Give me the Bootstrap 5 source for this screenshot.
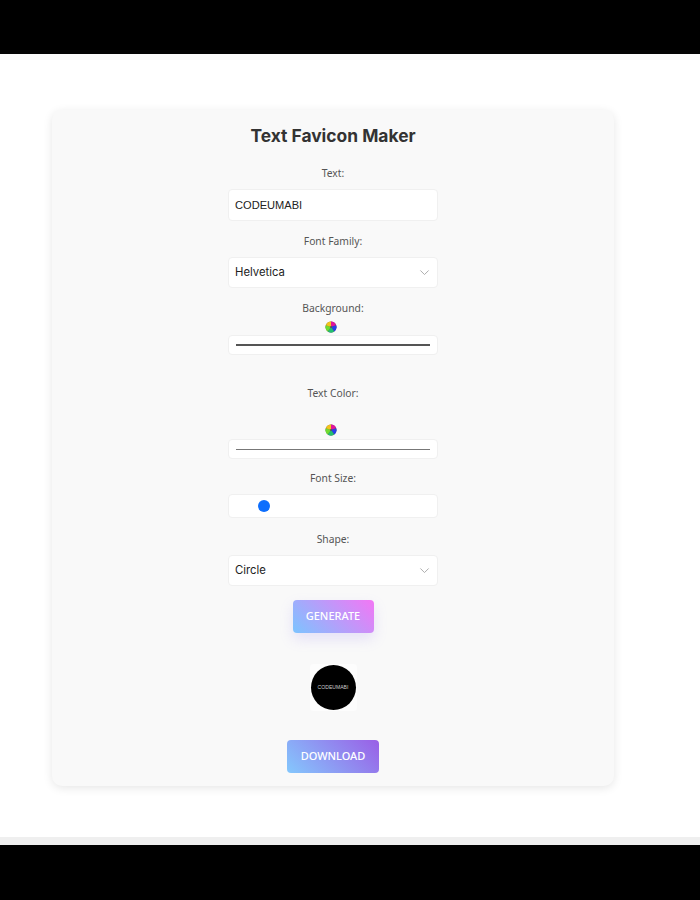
<!DOCTYPE html>
<html lang="en">
<head>
<meta charset="utf-8">
<title>Text Favicon Maker</title>
<link href="https://cdn.jsdelivr.net/npm/bootstrap@5.3.0/dist/css/bootstrap.min.css" rel="stylesheet">
<style>
html,body{height:900px;overflow:hidden;background:#fff;}
.shell{height:900px;display:flex;flex-direction:column;}
.blackbar{background:#000;flex:none;}
.blackbar.top{height:54px;}
.blackbar.bot{height:55px;}
.fadebar{flex:none;background:#f9f9f9;height:6px;}
.fadebar.low{background:#efefef;height:8px;}
.stage{flex:1;padding:50px 86px 0 52px;}
.panel{height:676px;background:#f9f9f9;border-radius:10px;box-shadow:0 2px 10px rgba(0,0,0,.1);padding:14px 0 0;text-align:center;font-family:"Noto Sans","Open Sans",sans-serif;}
.heading{font-family:Inter,"Liberation Sans",sans-serif;font-weight:700;font-size:17.4px;line-height:24px;color:#333;margin:0 0 18px;}
.formcol{width:210px;margin:0 auto;}
.lbl{display:block;font-size:10.3px;line-height:14px;color:#555;margin:0 0 9px;}
.lbl.bgl{margin:1px 0 6px;}
.lbl.tcl{margin:0 0 24px;}
.fld{display:block;width:100%;background:#fff;border:1px solid #f0f0f0;border-radius:4px;}
.txt{height:32px;padding:0 6px;font-family:"Liberation Sans",Arial,sans-serif;font-size:11.1px;color:#222;margin-bottom:13px;}
.sel{height:31px;padding:0 6px;font-family:Inter,sans-serif;font-size:11.3px;color:#222;margin-bottom:13px;appearance:none;background-image:url("data:image/svg+xml,%3csvg xmlns='http://www.w3.org/2000/svg' viewBox='0 0 16 16'%3e%3cpath fill='none' stroke='%23aaa' stroke-width='1.4' d='M2 5l6 6 6-6'/%3e%3c/svg%3e");background-repeat:no-repeat;background-position:right 7px center;background-size:11px;}
.sel.shapesel{margin-bottom:14px;}
.wheel{display:block;margin:0 auto;width:12px;height:12px;position:relative;left:-2px;}
.swatch{height:20px;display:flex;align-items:center;padding:0 7px;}
.swatch i{display:block;flex:1;height:1.5px;background:#555;}
.swatch.first{margin-top:2px;margin-bottom:31px;}
.swatch.pale{margin-top:3px;margin-bottom:12px;}
.swatch.pale i{background:#777;height:1px;}
.slider{height:24px;padding:0 7px;display:flex;align-items:center;margin-bottom:14px;}
.slider input{display:block;width:100%;height:12px;margin:0;}
.slider input::-webkit-slider-runnable-track{background:transparent;height:12px;}
.slider input::-webkit-slider-thumb{width:12px;height:12px;margin-top:0;background:#0d6efd;}
.actbtn{display:block;margin:0 auto;color:#fff;border:0;border-radius:4px;font-family:"Noto Sans","Open Sans",sans-serif;font-weight:500;font-size:11px;padding:0;}
.gen{width:81px;height:33px;background:linear-gradient(45deg,#7cc4ff,#f376f5);box-shadow:0 6px 14px rgba(150,130,240,.2);}
.dl{width:92px;height:33px;background:linear-gradient(45deg,#84c8fd,#9a5ee6);}
.iconbox{width:47px;height:47px;margin:31px auto 29px;background:#fdfdfd;border-radius:4px;padding:1px;}
.disc{width:45px;height:45px;background:#000;color:#ccc;border-radius:50%;display:flex;align-items:center;justify-content:center;font-family:"Liberation Sans",sans-serif;font-size:5.1px;}
</style>
</head>
<body>
<div class="shell">
  <div class="blackbar top"></div>
  <div class="fadebar"></div>
  <div class="stage">
    <div class="panel">
      <h1 class="heading">Text Favicon Maker</h1>
      <form class="formcol" onsubmit="return false">
        <label class="lbl" for="t">Text:</label>
        <input id="t" class="fld txt" type="text" value="CODEUMABI">
        <label class="lbl" for="f">Font Family:</label>
        <select id="f" class="fld sel"><option>Helvetica</option></select>
        <span class="lbl bgl">Background:</span>
        <svg class="wheel" viewBox="0 0 12 12" aria-hidden="true">
          <circle cx="6" cy="6" r="5.5" fill="#555"/>
          <path d="M6 6V.5A5.5 5.5 0 0 1 11.2 4.3Z" fill="#e0149b"/>
          <path d="M6 6 11.2 4.3A5.5 5.5 0 0 1 9.2 10.5Z" fill="#2a3fe8"/>
          <path d="M6 6 9.2 10.5A5.5 5.5 0 0 1 2.8 10.5Z" fill="#22c070"/>
          <path d="M6 6 2.8 10.5A5.5 5.5 0 0 1 .8 4.3Z" fill="#6fdc2f"/>
          <path d="M6 6 .8 4.3A5.5 5.5 0 0 1 6 .5Z" fill="#f3c31c"/>
          <circle cx="6" cy="6" r="1" fill="#555"/>
        </svg>
        <div class="fld swatch first"><i></i></div>
        <span class="lbl tcl">Text Color:</span>
        <svg class="wheel" viewBox="0 0 12 12" aria-hidden="true">
          <circle cx="6" cy="6" r="5.5" fill="#555"/>
          <path d="M6 6V.5A5.5 5.5 0 0 1 11.2 4.3Z" fill="#e0149b"/>
          <path d="M6 6 11.2 4.3A5.5 5.5 0 0 1 9.2 10.5Z" fill="#2a3fe8"/>
          <path d="M6 6 9.2 10.5A5.5 5.5 0 0 1 2.8 10.5Z" fill="#22c070"/>
          <path d="M6 6 2.8 10.5A5.5 5.5 0 0 1 .8 4.3Z" fill="#6fdc2f"/>
          <path d="M6 6 .8 4.3A5.5 5.5 0 0 1 6 .5Z" fill="#f3c31c"/>
          <circle cx="6" cy="6" r="1" fill="#555"/>
        </svg>
        <div class="fld swatch pale"><i></i></div>
        <label class="lbl" for="s">Font Size:</label>
        <div class="fld slider"><input id="s" class="form-range" type="range" min="0" max="100" value="12"></div>
        <label class="lbl" for="h">Shape:</label>
        <select id="h" class="fld sel shapesel"><option>Circle</option></select>
        <button class="actbtn gen" type="button">GENERATE</button>
        <div class="iconbox"><div class="disc">CODEUMABI</div></div>
        <button class="actbtn dl" type="button">DOWNLOAD</button>
      </form>
    </div>
  </div>
  <div class="fadebar low"></div>
  <div class="blackbar bot"></div>
</div>
<script src="https://cdn.jsdelivr.net/npm/bootstrap@5.3.0/dist/js/bootstrap.bundle.min.js"></script>
</body>
</html>
